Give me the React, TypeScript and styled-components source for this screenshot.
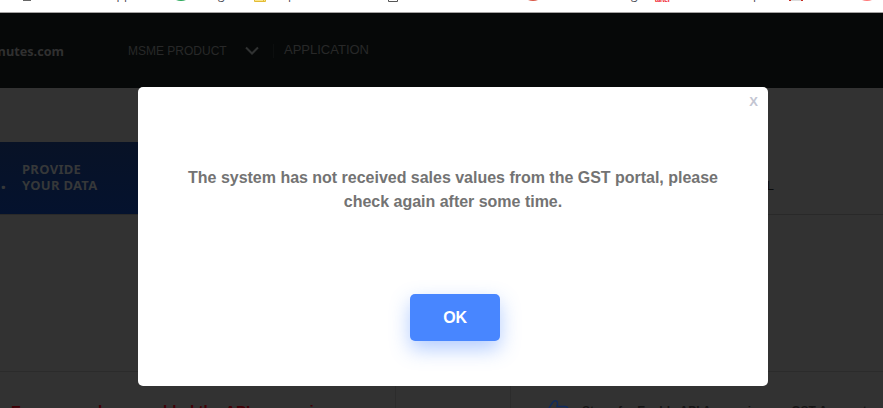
import React from "react";
import styled, { createGlobalStyle } from "styled-components";

const Global = createGlobalStyle`
  * { box-sizing: border-box; }
  html, body { margin: 0; overflow: hidden; background: #fff; }
  body { font-family: "Liberation Sans", Arial, sans-serif; }
`;

const Page = styled.div`
  position: relative;
  display: flex;
  flex-direction: column;
  width: 883px;
  height: 408px;
  overflow: hidden;
`;

const BookmarkBar = styled.div`
  display: flex;
  align-items: flex-start;
  flex: none;
  height: 13px;
  overflow: hidden;
  background: #fff;
  border-bottom: 1px solid #a5a3a3;
`;

const Mark = styled.svg<{ $gap: number }>`
  display: block;
  flex: none;
  margin-left: ${(p) => p.$gap}px;
`;

const MarkLabel = styled.span<{ $gap: number; $width: number }>`
  flex: none;
  width: ${(p) => p.$width}px;
  margin-left: ${(p) => p.$gap}px;
  margin-top: -12px;
  font: 12px/14px "Open Sans", sans-serif;
  color: #4a4b55;
  white-space: nowrap;
`;

const AirtelLabel = styled(MarkLabel)`
  margin-top: -4px;
  font: bold 7px/8px "Liberation Sans", sans-serif;
  letter-spacing: -0.4px;
  color: #f02832;
`;

const Header = styled.header`
  display: flex;
  align-items: center;
  flex: none;
  height: 75px;
  background: #060808;
  color: #282828;
`;

const Brand = styled.div`
  width: 64px;
  flex: none;
  display: flex;
  justify-content: flex-end;
  overflow: hidden;
  font: bold 12.700px/16px "Open Sans", sans-serif;
  color: #303030;
`;

const NavItem = styled.div<{ $gap: number; $size: number; $width: number; $drop?: number; $lift?: number }>`
  flex: none;
  width: ${(p) => p.$width}px;
  margin-left: ${(p) => p.$gap}px;
  padding-top: ${(p) => p.$drop ?? 0}px;
  padding-bottom: ${(p) => p.$lift ?? 0}px;
  font-size: ${(p) => p.$size}px;
  line-height: 16px;
  white-space: nowrap;
`;

const NavDivider = styled.i`
  width: 1px;
  height: 14px;
  margin-left: 14px;
  background: #0c0e0e;
`;

const Body = styled.main`
  display: flex;
  flex-direction: column;
  flex: 1;
  min-height: 0;
  padding-top: 54px;
  background: #323232;
`;

const Steps = styled.nav`
  display: flex;
  flex: none;
  height: 73px;
  border-bottom: 1px solid #292929;
`;

const ActiveStep = styled.div`
  display: flex;
  align-items: center;
  width: 250px;
  background: linear-gradient(#081226, #04122e);
  color: #363839;
  font: bold 13px/16px "Noto Sans", sans-serif;
`;

const StepNumber = styled.span`
  display: flex;
  justify-content: flex-end;
  width: 6px;
  padding-top: 8px;
  overflow: hidden;
  font-size: 20px;
  line-height: 20px;
`;

const StepName = styled.span`
  margin-left: 16px;
  padding-bottom: 3px;
  letter-spacing: 0.3px;
`;

const NextStep = styled.div`
  display: flex;
  align-items: center;
  justify-content: flex-end;
  width: 524px;
  padding-top: 14px;
  font-size: 13px;
  color: #0c0c0c;
`;

const Gap = styled.div`
  flex: none;
  height: 157px;
  border-bottom: 1px solid #2b2b2b;
`;

const Columns = styled.div`
  display: grid;
  grid-template-columns: 396px 115px 1fr;
  flex: 1;
  min-height: 0;
  overflow: hidden;
`;

const Column = styled.section<{ $ruled?: boolean }>`
  border-right: ${(p) => (p.$ruled ? "1px solid #2c2c2c" : "0")};
  min-width: 0;
`;

const Notice = styled.p`
  margin: 30px 0 0 11px;
  font-size: 15px;
  font-weight: bold;
  line-height: 18px;
  letter-spacing: 0.1px;
  white-space: nowrap;
  color: #400006;
`;

const Guide = styled.div`
  display: flex;
  gap: 12px;
  margin: 27px 0 0 37px;
`;

const ThumbIcon = styled.svg`
  flex: none;
`;

const GuideTitle = styled.p`
  margin: 4px 0 0;
  font-size: 12px;
  font-weight: bold;
  line-height: 16px;
  white-space: nowrap;
  color: #151515;
`;

const Dialog = styled.div`
  position: absolute;
  top: 87px;
  left: 138px;
  display: flex;
  flex-direction: column;
  align-items: center;
  width: 630px;
  height: 299px;
  background: #fff;
  border-radius: 5px;
`;

const Close = styled.button`
  align-self: flex-end;
  margin-right: 10px;
  margin-top: 6px;
  padding: 0;
  height: 17px;
  border: 0;
  background: none;
  font: bold 13px/17px "Liberation Sans", sans-serif;
  color: #c3c5d2;
`;

const Message = styled.p`
  width: 560px;
  margin: 56px 0 0;
  font-size: 16px;
  font-weight: bold;
  line-height: 24px;
  letter-spacing: -0.015px;
  text-align: center;
  color: #737373;
`;

const OkButton = styled.button`
  width: 90px;
  height: 47px;
  margin: 80px 0 0 4px;
  border: 0;
  border-radius: 5px;
  background: #4886ff;
  box-shadow: 0 8px 20px rgba(72, 134, 255, 0.42);
  color: #fff;
  font: bold 16px "Liberation Sans", sans-serif;
  letter-spacing: -0.3px;
`;

export default function App() {
  return (
    <>
      <Global />
      <Page>
        <BookmarkBar>
          <Mark $gap={22} width="10" height="3"><path d="M1 0h8v1H1z" fill="#666" /></Mark>
          <MarkLabel $gap={77} $width={27}>Apps</MarkLabel>
          <Mark $gap={39} width="12" height="3"><path d="M1 0h10Q6 2 1 0" fill="#2aa85a" /></Mark>
          <MarkLabel $gap={31} $width={10}>g</MarkLabel>
          <Mark $gap={26} width="12" height="3"><path d="M.5-1v2.500h11V-1M9.500-1v2.500" fill="#fbe58d" stroke="#e3bc35" /></Mark>
          <MarkLabel $gap={22} $width={8}>p</MarkLabel>
          <Mark $gap={92} width="10" height="3"><path d="M.5-1v2.500h9V-1" fill="none" stroke="#555" /></Mark>
          <Mark $gap={129} width="12" height="3"><path d="M1 0h10Q6 2 1 0" fill="#d95645" /></Mark>
          <MarkLabel $gap={92} $width={10}>g</MarkLabel>
          <AirtelLabel $gap={14} $width={20}>airtel</AirtelLabel>
          <MarkLabel $gap={78} $width={8}>p</MarkLabel>
          <Mark $gap={28} width="14" height="3"><path d="M2 0h10v1H2z" fill="#ddd" /><path d="M0 0h2v1H0zM12 0h2v1h-2z" fill="#c72c22" /></Mark>
          <Mark $gap={58} width="12" height="3"><path d="M1 0h10Q6 2 1 0" fill="#ff7777" /></Mark>
        </BookmarkBar>
        <Header>
          <Brand>minutes.com</Brand>
          <NavItem $gap={64} $size={12} $width={99} $drop={1}>MSME PRODUCT</NavItem>
          <Mark $gap={18} width="14" height="9"><path d="M1 1.500 7 7.500 13 1.500" fill="none" stroke="#303232" strokeWidth="2" /></Mark>
          <NavDivider />
          <NavItem $gap={10} $size={13} $width={90} $lift={2}>APPLICATION</NavItem>
        </Header>
        <Body>
          <Steps>
            <ActiveStep>
              <StepNumber>1.</StepNumber>
              <StepName>PROVIDE<br />YOUR DATA</StepName>
            </ActiveStep>
            <NextStep>APPROVAL</NextStep>
          </Steps>
          <Gap />
          <Columns>
            <Column $ruled><Notice>Ensure you have enabled the API access in</Notice></Column>
            <Column $ruled />
            <Column>
              <Guide>
                <ThumbIcon width="22" height="22" viewBox="0 0 22 22" fill="none" stroke="#122b5c" strokeWidth="1.500">
                  <path d="M1 9 5 3Q7 .8 9 2.500Q10 4 9 7.500h8q3 0 3 3v9H5V9" />
                </ThumbIcon>
                <GuideTitle>Steps for Enable API Access in your GST Account</GuideTitle>
              </Guide>
            </Column>
          </Columns>
        </Body>
        <Dialog>
          <Close>X</Close>
          <Message>The system has not received sales values from the GST portal, please check again after some time.</Message>
          <OkButton>OK</OkButton>
        </Dialog>
      </Page>
    </>
  );
}
